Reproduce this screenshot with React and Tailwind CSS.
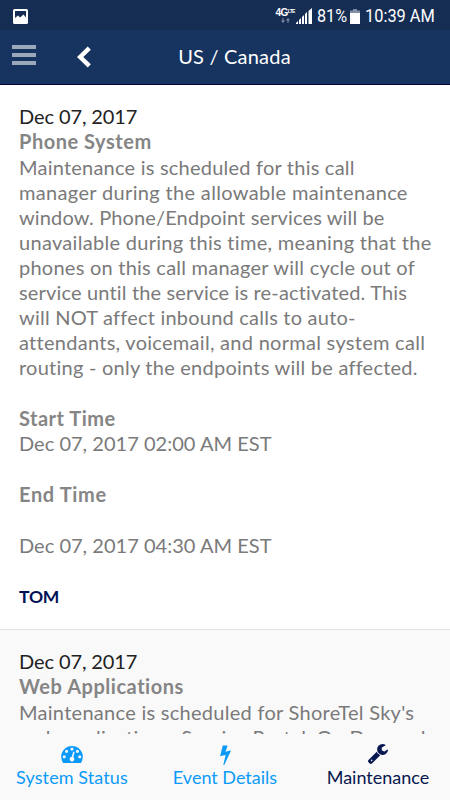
const notices = [
    {
        date: 'Dec 07, 2017',
        title: 'Phone System',
        lines: [
            { text: 'Maintenance is scheduled for this call', tracking: 'tracking-[0.22px]' },
            { text: 'manager during the allowable maintenance', tracking: 'tracking-[0.34px]' },
            { text: 'window. Phone/Endpoint services will be', tracking: 'tracking-[0.13px]' },
            { text: 'unavailable during this time, meaning that the', tracking: 'tracking-[0.3px]' },
            { text: 'phones on this call manager will cycle out of', tracking: 'tracking-[0.24px]' },
            { text: 'service until the service is re-activated. This', tracking: 'tracking-[0.16px]' },
            { text: 'will NOT affect inbound calls to auto-', tracking: 'tracking-[0.22px]' },
            { text: 'attendants, voicemail, and normal system call', tracking: 'tracking-[0.28px]' },
            { text: 'routing - only the endpoints will be affected.', tracking: 'tracking-[0.24px]' },
        ],
        start: 'Dec 07, 2017 02:00 AM EST',
        end: 'Dec 07, 2017 04:30 AM EST',
        author: 'TOM',
    },
    {
        date: 'Dec 07, 2017',
        title: 'Web Applications',
        lines: [
            { text: "Maintenance is scheduled for ShoreTel Sky's", tracking: 'tracking-[0.28px]' },
            { text: 'web applications: Service Portal, On Demand', tracking: 'tracking-[0.3px]' },
        ],
    },
];

function GaugeIcon() {
    return (
        <svg viewBox="0 256 1792 1408" className="w-[22px] h-[17px]" fill="currentColor">
            <path d="M384 1152q0-53-37.5-90.5T256 1024t-90.5 37.5T128 1152t37.5 90.5T256 1280t90.5-37.5T384 1152zm192-448q0-53-37.5-90.5T448 576t-90.5 37.5T320 704t37.5 90.5T448 832t90.5-37.5T576 704zm428 481l101-382q6-26-7.5-48.500T1059 725t-48 6.500-30 39.500l-101 382q-60 5-107 43.500t-63 98.500q-20 77 20 146t117 89 146-20 89-117q16-60-6-117t-72-91zm660-33q0-53-37.500-90.500T1536 1024t-90.500 37.500-37.500 90.500 37.500 90.500 90.500 37.500 90.500-37.500 37.500-90.500zm-640-640q0-53-37.500-90.500T896 384t-90.500 37.500T768 512t37.500 90.500T896 640t90.500-37.500T1024 512zm448 192q0-53-37.500-90.500T1344 576t-90.500 37.500T1216 704t37.500 90.500T1344 832t90.500-37.500T1472 704zm320 448q0 261-141 483-19 29-54 29H195q-35 0-54-29Q0 1414 0 1152q0-182 71-348t191-286 286-191 348-71 348 71 286 191 191 286 71 348z" />
        </svg>
    );
}

function BoltIcon() {
    return (
        <svg viewBox="448 0 896 1792" className="w-[11px] h-[21px]" fill="currentColor">
            <path d="M1333 566q18 20 7 44l-540 1157q-13 25-42 25-4 0-14-2-17-5-25.500-19t-4.500-30l197-808-406 101q-4 1-12 1-18 0-31-11-18-15-13-39l201-825q4-14 16-23t28-9h328q19 0 32 12.500t13 29.500q0 8-5 18l-171 463 396-98q8-2 12-2 19 0 34 15z" />
        </svg>
    );
}

function WrenchIcon() {
    return (
        <svg viewBox="85 128 1641 1643" className="w-5 h-5" fill="currentColor">
            <path d="M448 1472q0-26-19-45t-45-19-45 19-19 45 19 45 45 19 45-19 19-45zm644-420l-682 682q-37 37-90 37-52 0-91-37L123 1626q-38-36-38-90 0-53 38-91l681-681q39 98 114.500 173.500T1092 1052zm634-435q0 39-23 106-47 134-164.500 217.500T1280 1024q-185 0-316.500-131.500T832 576t131.500-316.500T1280 128q58 0 121.500 16.500T1509 191q16 11 16 28t-16 28l-293 169v224l193 107q5-3 79-48.500t135.500-81T1694 582q15 0 23.500 10t8.500 25z" />
        </svg>
    );
}

function StatusBar() {
    return (
        <div className="flex h-[30px] items-center bg-[#152c53] pl-[13px] pr-[14px] pt-[2px] text-white">
            <svg viewBox="0 0 15 15" className="h-[15px] w-[15px]">
                <path fill="currentColor" fillRule="evenodd" d="M1.500 0h12A1.500 1.500 0 0 1 15 1.500v12a1.500 1.500 0 0 1-1.500 1.500h-12A1.500 1.500 0 0 1 0 13.500v-12A1.500 1.500 0 0 1 1.500 0ZM2 2v7l3-2.500 2 2 3.500-3L13 8.500V2Z" />
            </svg>
            <div className="ml-auto flex items-center">
                <div className="flex h-[17px] w-[20px] flex-col items-center">
                    <div className="flex items-start font-['Liberation_Sans'] text-[10px] leading-[10px] font-bold tracking-[-0.5px]">
                        <span>4G</span>
                        <span className="text-[5px] leading-[7px] tracking-[-0.8px]">LTE</span>
                    </div>
                    <svg viewBox="0 0 9 5" className="h-[5px] w-[9px] text-[#8290a6]">
                        <path fill="currentColor" d="M1.500 0h1v2.500H4L2 5 0 2.500h1.500ZM6.500 5h1V2.500H9L7 0 5 2.500h1.500Z" />
                    </svg>
                </div>
                <svg viewBox="0 0 16 16" className="ml-px h-4 w-4">
                    <path fill="currentColor" d="M0 16v-1l2-2v3ZM3 16v-4l2-2v6ZM6 16V9l2-2v9ZM9 16V6l2-2v12ZM12.500 16V3L16 0v16Z" />
                </svg>
                <span className="ml-[5px] w-[31px] origin-left scale-x-90 whitespace-nowrap font-[Roboto] text-[18px] leading-5">81%</span>
                <svg viewBox="0 0 10 15" className="ml-[2px] h-[15px] w-[10px]">
                    <path fill="#8290a6" d="M3 0h4v1.500h3V4H0V1.500h3Z" />
                    <path fill="currentColor" d="M0 4h10v11H0Z" />
                </svg>
                <span className="ml-[5px] w-[71px] origin-left scale-x-[0.91] whitespace-nowrap font-[Roboto] text-[18px] leading-5">10:39 AM</span>
            </div>
        </div>
    );
}

function Header() {
    return (
        <header className="relative flex h-[55px] items-center justify-center border-b border-[#0a0038] bg-[#17335f]">
            <button className="absolute left-3 top-[15px] flex flex-col gap-1">
                <span className="h-1 w-6 bg-[#9ba7bb]" />
                <span className="h-1 w-6 bg-[#9ba7bb]" />
                <span className="h-1 w-6 bg-[#9ba7bb]" />
            </button>
            <button className="absolute left-[77px] top-4 text-white">
                <svg viewBox="0 0 14 22" className="h-[22px] w-[14px]" fill="none">
                    <path d="M12.300 2.200 3.200 11l9.100 8.800" stroke="currentColor" strokeWidth="4.500" />
                </svg>
            </button>
            <h1 className="pb-[2px] pl-[19px] text-[20px] tracking-[0.2px] text-white">US / Canada</h1>
        </header>
    );
}

function Notice({ notice }) {
    return (
        <article className="px-[19px] text-[20px] leading-[25px] text-[#7a7a7a] whitespace-nowrap">
            <p className="tracking-[-0.1px] text-[#222]">{notice.date}</p>
            <h2 className="mb-px font-bold tracking-[0.53px] text-[#858585]">{notice.title}</h2>
            {notice.lines.map((line) => (
                <p key={line.text} className={line.tracking}>{line.text}</p>
            ))}
            {notice.start && (
                <>
                    <h3 className="mt-[26px] font-bold tracking-[0.5px] text-[#858585]">Start Time</h3>
                    <p className="tracking-[0.02px]">{notice.start}</p>
                    <h3 className="mt-[26px] font-bold tracking-[0.65px] text-[#858585]">End Time</h3>
                    <p className="mt-[26px] tracking-[0.02px]">{notice.end}</p>
                    <p className="mt-[26px] text-[17.500px] font-bold tracking-[-0.2px] text-[#001257]">{notice.author}</p>
                </>
            )}
        </article>
    );
}

function TabBar() {
    return (
        <nav className="flex h-[66px] bg-[#f9f9f9] text-[18px] leading-5 whitespace-nowrap text-[#0c9af8]">
            <a className="flex w-[144px] flex-col items-center">
                <span className="flex h-[33px] items-center pt-[7px]"><GaugeIcon /></span>
                <span className="tracking-[0.1px]">System Status</span>
            </a>
            <a className="flex w-[162px] flex-col items-center">
                <span className="flex h-[33px] items-center pt-[7px]"><BoltIcon /></span>
                <span>Event Details</span>
            </a>
            <a className="flex w-[144px] flex-col items-center text-[#07174f]">
                <span className="flex h-[33px] items-center pt-[7px]"><WrenchIcon /></span>
                <span>Maintenance</span>
            </a>
        </nav>
    );
}

export default function App() {
    return (
        <div className="flex h-[800px] w-[450px] flex-col overflow-hidden bg-white font-[Lato,sans-serif]">
            <StatusBar />
            <Header />
            <main className="min-h-0 flex-1 overflow-hidden">
                <section className="h-[544px] pt-[19px]">
                    <Notice notice={notices[0]} />
                </section>
                <section className="border-t border-[#e2e2e2] bg-[#f9f9f9] pt-[19px]">
                    <Notice notice={notices[1]} />
                </section>
            </main>
            <TabBar />
        </div>
    );
}
